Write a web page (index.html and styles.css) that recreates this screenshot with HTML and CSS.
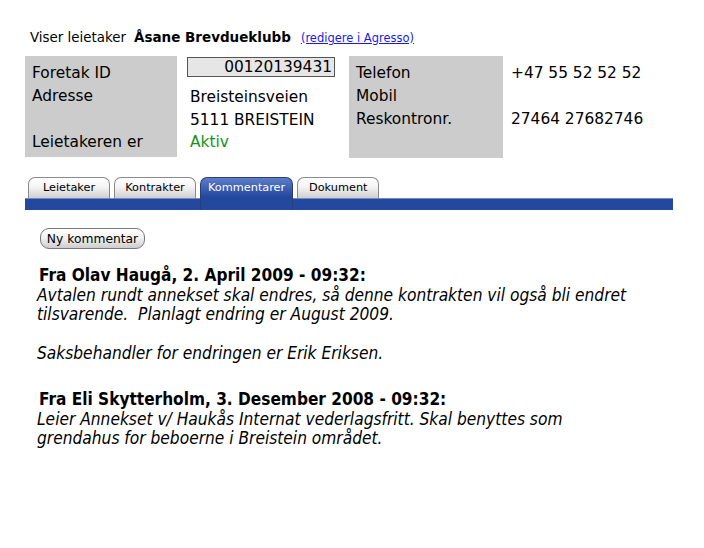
FILE: index.html
```html
<!DOCTYPE html>
<html lang="no">
<head>
<meta charset="utf-8">
<title>Leietaker</title>
<link rel="stylesheet" href="styles.css">
</head>
<body>
<div class="page">
  <div class="title">
    <span class="title-label">Viser leietaker</span>
    <span class="title-name">Åsane Brevdueklubb</span>
    <a class="title-link" href="#">(redigere i Agresso)</a>
  </div>

  <div class="info">
    <div class="labels">
      <div class="row">Foretak ID</div>
      <div class="row">Adresse</div>
      <div class="row">&nbsp;</div>
      <div class="row">Leietakeren er</div>
    </div>
    <div class="values">
      <div class="idbox">00120139431</div>
      <div class="vrow">Breisteinsveien</div>
      <div class="vrow">5111 BREISTEIN</div>
      <div class="vrow status">Aktiv</div>
    </div>
    <div class="labels labels-right">
      <div class="row">Telefon</div>
      <div class="row">Mobil</div>
      <div class="row">Reskontronr.</div>
    </div>
    <div class="values-right">
      <div class="row">+47 55 52 52 52</div>
      <div class="row">&nbsp;</div>
      <div class="row">27464 27682746</div>
    </div>
  </div>

  <div class="tabs">
    <div class="tab">Leietaker</div>
    <div class="tab">Kontrakter</div>
    <div class="tab tab-active">Kommentarer</div>
    <div class="tab">Dokument</div>
  </div>
  <div class="tabbar"></div>

  <div class="content">
    <button class="btn">Ny kommentar</button>

    <div class="comment">
      <div class="comment-head">Fra Olav Haugå, 2. April 2009 - 09:32:</div>
      <div class="comment-body">Avtalen rundt annekset skal endres, så denne kontrakten vil også bli endret<br>tilsvarende.&nbsp; Planlagt endring er August 2009.<br><br>Saksbehandler for endringen er Erik Eriksen.</div>
    </div>

    <div class="comment">
      <div class="comment-head">Fra Eli Skytterholm, 3. Desember 2008 - 09:32:</div>
      <div class="comment-body">Leier Annekset v/ Haukås Internat vederlagsfritt. Skal benyttes som<br>grendahus for beboerne i Breistein området.</div>
    </div>
  </div>
</div>
</body>
</html>
```

FILE: styles.css
```css
html, body {
  margin: 0;
  padding: 0;
  background: #fff;
}
body {
  font-family: "DejaVu Sans", sans-serif;
  color: #000;
}
.page {
  padding: 27px 0 0 25px;
  width: 648px;
}
.title {
  display: flex;
  align-items: baseline;
  padding-left: 5px;
  font-size: 13.4px;
  line-height: 20px;
}
.title-name {
  font-weight: bold;
  font-size: 13.5px;
  margin-left: 8px;
}
.title-link {
  margin-left: 10px;
  font-size: 11.5px;
  color: #1a1ae6;
  text-decoration: underline;
}
.info {
  display: flex;
  margin-top: 8px;
  font-size: 15.4px;
}
.labels {
  width: 145px;
  height: 95px;
  background: #cccccc;
  padding: 6px 0 0 7px;
}
.row {
  line-height: 23px;
  height: 23px;
  white-space: nowrap;
}
.values {
  width: 152px;
  margin-left: 10px;
  padding-top: 1px;
}
.idbox {
  box-sizing: border-box;
  width: 148px;
  height: 20px;
  border: 1px solid #555;
  background: #e6e6e6;
  text-align: right;
  padding-right: 2px;
  line-height: 18px;
}
.vrow {
  margin-left: 3px;
  line-height: 22.5px;
  height: 22.5px;
}
.idbox + .vrow {
  margin-top: 9px;
}
.status {
  color: #149414;
}
.labels-right {
  width: 147px;
  height: 96px;
  margin-left: 10px;
}
.values-right {
  margin-left: 8px;
  padding-top: 6px;
}
.tabs {
  display: flex;
  gap: 4px;
  margin-top: 19px;
  padding-left: 3px;
  height: 21px;
  align-items: flex-end;
}
.tab {
  box-sizing: border-box;
  min-width: 82px;
  height: 21px;
  padding: 0 7px;
  font-size: 11.3px;
  line-height: 19px;
  text-align: center;
  border: 1px solid #8a8a8a;
  border-bottom: none;
  border-radius: 7px 7px 0 0;
  background: linear-gradient(#ffffff 0%, #f4f4f4 45%, #cfcfcf 100%);
  color: #000;
}
.tab-active {
  height: 33px;
  margin-bottom: -12px;
  position: relative;
  z-index: 1;
  border-color: #2a3f78;
  background: linear-gradient(#5d7ecb 0%, #3a5cb0 35%, #24489e 60%, #24489e 100%);
  color: #fff;
  line-height: 20px;
}
.tabbar {
  height: 12px;
  box-sizing: border-box;
  background: #24489e;
  border-top: 1px solid #6f89c4;
}
.content {
  padding: 18px 0 0 15px;
}
.btn {
  display: block;
  box-sizing: border-box;
  width: 105px;
  height: 21px;
  padding: 0;
  font-family: "DejaVu Sans", sans-serif;
  font-size: 12.3px;
  color: #000;
  border: 1px solid #7a7a7a;
  border-radius: 9px;
  background: linear-gradient(#ffffff 0%, #f0f0f0 50%, #cdcdcd 100%);
}
.comment {
  margin-top: 16px;
}
.comment + .comment {
  margin-top: 26px;
}
.comment-head {
  font-family: "DejaVu Sans Condensed", "DejaVu Sans", sans-serif;
  font-stretch: condensed;
  font-weight: bold;
  font-size: 17.1px;
  line-height: 20px;
  margin-left: -1px;
}
.comment-body {
  font-family: "DejaVu Sans Condensed", "DejaVu Sans", sans-serif;
  font-stretch: condensed;
  font-style: italic;
  font-size: 17.2px;
  line-height: 19.3px;
  margin-left: -3px;
  padding-top: 1px;
}
```
